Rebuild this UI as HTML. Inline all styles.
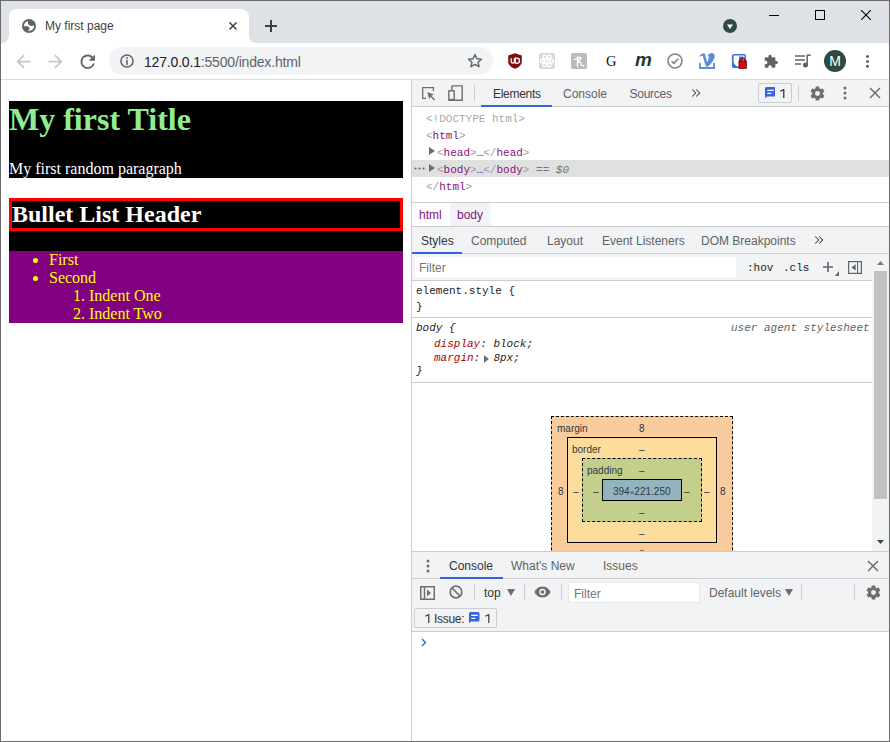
<!DOCTYPE html>
<html><head><meta charset="utf-8">
<style>
*{box-sizing:border-box;margin:0;padding:0}
html,body{width:890px;height:742px;overflow:hidden;background:#fff;font-family:"Liberation Sans",sans-serif;font-size:12px;color:#202124}
.a{position:absolute;white-space:nowrap}
#strip{position:absolute;left:0;top:0;width:890px;height:43px;background:#dee1e6}
#tab{position:absolute;left:9px;top:9px;width:240px;height:34px;background:#fff;border-radius:8px 8px 0 0}
#toolbar{position:absolute;left:0;top:43px;width:890px;height:37px;background:#fff;border-bottom:1px solid #dadce0}
#omni{position:absolute;left:109px;top:4px;width:384px;height:28px;background:#f1f3f4;border-radius:14px}
#page{position:absolute;left:1px;top:80px;width:410px;height:662px;background:#fff;font-family:"Liberation Serif",serif}
#dt{position:absolute;left:411px;top:80px;width:479px;height:662px;background:#fff;overflow:hidden}
.tb{position:absolute;background:#f1f3f4;border-bottom:1px solid #cacdd1}
.mono{font-family:"Liberation Mono",monospace;font-size:11px}
.tn{color:#881280}.br{color:#a894a6}
.lbl{color:#303942}
#frame{position:absolute;left:0;top:0;width:890px;height:742px;border:1px solid #6b6b6b;pointer-events:none}
</style></head><body>
 <div id="strip">
  <svg class="a" style="left:1px;top:35px" width="8" height="8" viewBox="0 0 8 8"><path d="M0 8C5 8 8 5 8 0V8z" fill="#fff"/></svg><svg class="a" style="left:249px;top:35px" width="8" height="8" viewBox="0 0 8 8"><path d="M8 8C3 8 0 5 0 0V8z" fill="#fff"/></svg>
  <div id="tab">
   <svg class="a" style="left:13px;top:10px" width="14" height="14" viewBox="0 0 14 14"><defs><mask id="gm"><circle cx="7" cy="7" r="5.1" fill="#fff"/><path fill="#000" d="M5.9 0V4.6C6.8 6.3 8.3 7.1 9.5 7 10.8 6.9 12 6.2 14 5.6V0z"/><path fill="#000" d="M0 7.3H5C6.4 7.5 7.6 8.5 7.6 9.5 7.6 10.5 5.8 11.4 4.8 14H0z"/></mask></defs><circle cx="7" cy="7" r="7" fill="#5f6368"/><rect width="14" height="14" fill="#fff" mask="url(#gm)"/></svg>
   <div class="a" style="left:36px;top:10px;font-size:12px;color:#3c4043">My first page</div>
   <svg class="a" style="left:219px;top:12px" width="10" height="10" viewBox="0 0 10 10"><path d="M1.5 1.5l7 7M8.5 1.5l-7 7" stroke="#3c4043" stroke-width="1.5"/></svg>
  </div>
  <svg class="a" style="left:264px;top:19px" width="14" height="14" viewBox="0 0 14 14"><path d="M7 1v12M1 7h12" stroke="#3c4043" stroke-width="2"/></svg>
  <svg class="a" style="left:723px;top:19px" width="14" height="14" viewBox="0 0 14 14"><circle cx="7" cy="7" r="7" fill="#2d4a43"/><path d="M4 5.5h6L7 10z" fill="#fff"/></svg>
  <div class="a" style="left:769px;top:15px;width:10px;height:1px;background:#000"></div>
  <div class="a" style="left:815px;top:10px;width:10px;height:10px;border:1px solid #000"></div>
  <svg class="a" style="left:861px;top:10px" width="10" height="10" viewBox="0 0 10 10"><path d="M0 0l10 10M10 0L0 10" stroke="#000" stroke-width="1.1"/></svg>
 </div>
 <div id="toolbar">
  <svg class="a" style="left:12.5px;top:7.5px" width="21" height="21" viewBox="0 0 24 24"><path fill="#c4c7ca" d="M20 11H7.83l5.59-5.59L12 4l-8 8 8 8 1.41-1.41L7.83 13H20v-2z"/></svg>
  <svg class="a" style="left:44.7px;top:7.5px" width="21" height="21" viewBox="0 0 24 24"><path fill="#c4c7ca" d="M12 4l-1.41 1.41L16.17 11H4v2h12.17l-5.58 5.59L12 20l8-8z"/></svg>
  <svg class="a" style="left:77px;top:7.8px" width="21.5" height="21.5" viewBox="0 0 24 24"><path fill="#5f6368" d="M17.65 6.35A7.958 7.958 0 0 0 12 4c-4.42 0-7.99 3.58-7.99 8s3.57 8 7.990 8c3.73 0 6.84-2.55 7.73-6h-2.08A5.99 5.99 0 0 1 12 18c-3.31 0-6-2.69-6-6s2.69-6 6-6c1.66 0 3.14.69 4.22 1.78L13 11h7V4l-2.35 2.35z"/></svg>
  <div id="omni">
   <svg class="a" style="left:10.5px;top:6.6px" width="14" height="14" viewBox="0 0 14 14"><circle cx="7" cy="7" r="6.1" stroke="#5f6368" stroke-width="1.5" fill="none"/><rect x="6.2" y="6" width="1.6" height="5" fill="#5f6368"/><rect x="6.2" y="3.2" width="1.6" height="1.7" fill="#5f6368"/></svg>
   <div class="a" style="left:35px;top:6.5px;font-size:14px;letter-spacing:-0.18px;color:#202124">127.0.0.1<span style="color:#5f6368">:5500/index.html</span></div>
   <svg class="a" style="left:358px;top:6px" width="16" height="16" viewBox="0 0 16 16"><path d="M8 1.5l1.9 4.3 4.6.4-3.5 3 1.1 4.5L8 11.3l-4.1 2.4 1.1-4.5-3.5-3 4.6-.4z" stroke="#5f6368" stroke-width="1.4" fill="none" stroke-linejoin="round"/></svg>
  </div>
  <svg class="a" style="left:508px;top:10px" width="14" height="16" viewBox="0 0 14 16"><path d="M7 0.3L13.8 2.4V8.5C13.8 12 10.5 14.6 7 15.8 3.5 14.6 0.2 12 0.2 8.5V2.4z" fill="#800c0c"/><path d="M3.2 5.2v3.3c0 1.1.8 1.7 1.6 1.7s1.6-.6 1.6-1.7V5.2" stroke="#fff" stroke-width="1.3" fill="none"/><path d="M7.3 5.2h1.7a2.5 2.5 0 0 1 0 5H7.3z" stroke="#fff" stroke-width="1.3" fill="none"/></svg>
  <div class="a" style="left:539px;top:10px;width:16px;height:16px;background:#d6d8dc;border-radius:2px"></div>
  <svg class="a" style="left:539px;top:10px" width="16" height="16" viewBox="0 0 16 16"><g stroke="#fff" stroke-width="1.4" fill="none"><ellipse cx="8" cy="8" rx="6.5" ry="2.5"/><ellipse cx="8" cy="8" rx="6.5" ry="2.5" transform="rotate(60 8 8)"/><ellipse cx="8" cy="8" rx="6.5" ry="2.5" transform="rotate(120 8 8)"/></g><circle cx="8" cy="8" r="1.2" fill="#fff"/></svg>
  <div class="a" style="left:571px;top:10px;width:16px;height:16px;background:#bcbcbc;border-radius:2px"></div>
  <svg class="a" style="left:571px;top:10px" width="16" height="16" viewBox="0 0 16 16"><path d="M6.5 3.6V13.4M3.8 6.4L6.5 6M6.5 7.2C7 4.5 9.3 3.7 9.8 5 10.3 6.5 8.2 7.6 6.5 8.6M6.6 9.6C8 8.6 9.6 9 10 10.6 10.5 12.4 11.2 13.4 12.8 12.4" stroke="#fff" stroke-width="1.3" fill="none" stroke-linecap="round"/></svg>
  <div class="a" style="left:606px;top:9px;font-family:'Liberation Serif',serif;font-size:14.5px;color:#111;line-height:18px">G</div>
  <div class="a" style="left:635px;top:7px;font-family:'Liberation Sans',sans-serif;font-size:19px;font-weight:bold;font-style:italic;color:#1f3a33;line-height:20px;letter-spacing:-0.5px">m</div>
  <svg class="a" style="left:667px;top:10px" width="16" height="16" viewBox="0 0 16 16"><circle cx="8" cy="8" r="7" stroke="#7f8583" stroke-width="1.6" fill="none"/><path d="M4.6 8.2l2.2 2.2 4.5-4.6" stroke="#7f8583" stroke-width="1.6" fill="none"/></svg>
  <svg class="a" style="left:699px;top:10px" width="16" height="16" viewBox="0 0 16 16"><path d="M0.9 10v5h14.2v-5" stroke="#5a8fd6" stroke-width="1.8" fill="none"/><path d="M0.2 3.5C1.5 1.5 3.5 0 5 .3 6 .6 6.3 2 6.8 4.5L8.2 9.2C9 7.5 10 5.5 9.8 4.2 9.6 3.2 9.2 3 8.8 2.8 9.5 1 11 .1 12.6.1c1.9 0 3.3 1.4 3.2 3.2-.2 2.7-3.3 7.5-6.5 10-.8.6-1.7.7-2.3-.1C6 11.5 4.8 6.5 4.2 4.2 3.9 3 3.5 2.6 3 2.7 2 2.8 1.2 3.5.2 3.5z" fill="#5a8fd6"/></svg>
  <svg class="a" style="left:731px;top:10px" width="16" height="16" viewBox="0 0 16 16"><rect x="0.9" y="0.9" width="14.2" height="14.2" rx="2.2" fill="#3f6ee8"/><path d="M2.6 2.6h10.8v5.8c0 3-2.8 4.8-5.4 5.5-2.6-.7-5.4-2.5-5.4-5.5z" fill="#fff"/><path d="M8 3.6h4.4v5c0 2.3-2.2 3.6-4.4 4.3z" fill="#3f6ee8"/><path d="M9.6 8.4V7.3a2 2 0 0 1 4 0v1.1" stroke="#b00010" stroke-width="1.5" fill="none"/><rect x="7.9" y="8" width="7.6" height="7.4" fill="#e8000f" stroke="#3a1010" stroke-width="0.7"/></svg>
  <svg class="a" style="left:763px;top:52px;display:none" width="1" height="1"></svg>
  <svg class="a" style="left:763px;top:11px" width="16" height="15" viewBox="0 0 24 24"><path fill="#5f6368" d="M20.5 11H19V7c0-1.1-.9-2-2-2h-4V3.5C13 2.12 11.88 1 10.5 1S8 2.12 8 3.5V5H4c-1.1 0-1.99.9-1.99 2v3.8H3.5c1.49 0 2.7 1.21 2.7 2.7s-1.21 2.7-2.7 2.7H2V20c0 1.1.9 2 2 2h3.8v-1.5c0-1.49 1.21-2.7 2.7-2.7 1.49 0 2.7 1.21 2.7 2.7V22H17c1.1 0 2-.9 2-2v-4h1.5c1.38 0 2.5-1.12 2.5-2.5S21.88 11 20.5 11z"/></svg>
  <svg class="a" style="left:795px;top:11px" width="16" height="14" viewBox="0 0 16 14"><path d="M0 2h10M0 6h10M0 10h6" stroke="#5f6368" stroke-width="1.5"/><path d="M12.2 11V1.2h3.5" stroke="#5f6368" stroke-width="1.5" fill="none"/><circle cx="10.5" cy="11" r="2.5" fill="#5f6368"/></svg>
  <div class="a" style="left:824px;top:49px;display:none"></div>
  <div class="a" style="left:824px;top:7px;width:22px;height:22px;border-radius:11px;background:#2d4a43;color:#fff;font-size:14px;line-height:22px;text-align:center">M</div>
  <svg class="a" style="left:865px;top:11px" width="5" height="14" viewBox="0 0 5 14"><circle cx="2.5" cy="2.5" r="1.5" fill="#5f6368"/><circle cx="2.5" cy="7.4" r="1.5" fill="#5f6368"/><circle cx="2.5" cy="12.3" r="1.5" fill="#5f6368"/></svg>
 </div>
 <div id="page">
  <div class="a" style="left:8px;top:21px;width:394px;height:76.5px;background:#000"></div>
  <div class="a" style="left:8px;top:21px;font-size:32px;font-weight:bold;color:#90ee90;line-height:37px">My first Title</div>
  <div class="a" style="left:8px;top:79.7px;font-size:16px;color:#fff;line-height:18.4px">My first random paragraph</div>
  <div class="a" style="left:8px;top:118px;width:394px;height:52.5px;background:#000"></div>
  <div class="a" style="left:8px;top:118px;width:394px;height:32.7px;border:3px solid #f00;"></div>
  <div class="a" style="left:11px;top:121px;font-size:24px;font-weight:bold;color:#fff;line-height:27.6px">Bullet List Header</div>
  <div class="a" style="left:8px;top:170.5px;width:394px;height:72px;background:#800080"></div>
  <div class="a" style="left:8px;top:170.5px;width:394px;font-size:16px;color:#ff0;line-height:18px">
   <ul style="padding-left:40px;list-style:disc"><li>First</li><li>Second<ol style="padding-left:40px"><li>Indent One</li><li>Indent Two</li></ol></li></ul>
  </div>
 </div>
 <div id="dt">
  <div class="a" style="left:0;top:0;width:1px;height:662px;background:#cbcdd1"></div>
  <!-- main toolbar -->
  <div class="tb" style="left:1px;top:0;width:478px;height:27px"></div>
  <svg class="a" style="left:11px;top:7px" width="14" height="14" viewBox="0 0 14 14"><path d="M4 11.4H0.7V0.7H11.4V4" stroke="#6e6e6e" stroke-width="1.3" fill="none"/><path d="M5.2 5L12 7.4 9.4 8.7 13.1 12.4 12.1 13.4 8.4 9.7 7.3 12.2z" fill="#6e6e6e"/></svg>
  <svg class="a" style="left:36px;top:4px" width="17" height="18" viewBox="0 0 17 18"><rect x="4.9" y="1.9" width="10.3" height="14.3" rx="0.4" stroke="#6e6e6e" stroke-width="1.4" fill="none"/><rect x="1.8" y="6.8" width="5.4" height="9.4" rx="0.4" stroke="#6e6e6e" stroke-width="1.4" fill="#f1f3f4"/><rect x="1.4" y="14.8" width="6.2" height="2" fill="#6e6e6e"/></svg>
  <div class="a" style="left:63px;top:5px;width:1px;height:16px;background:#cbcdd1"></div>
  <div class="a" style="left:82px;top:7px;color:#333;letter-spacing:-0.28px">Elements</div>
  <div class="a" style="left:70px;top:25px;width:71px;height:2px;background:#3264e2"></div>
  <div class="a" style="left:152px;top:7px;color:#5f6368">Console</div>
  <div class="a" style="left:218.5px;top:7px;color:#5f6368;letter-spacing:-0.25px">Sources</div>
  <svg class="a" style="left:280px;top:8px" width="10" height="10" viewBox="0 0 10 10"><path d="M1.2 1.5l3.5 3.5-3.5 3.5M5.2 1.5l3.5 3.5-3.5 3.5" stroke="#3c3c3c" stroke-width="1.05" fill="none"/></svg>
  <div class="a" style="left:346.5px;top:3.3px;width:34px;height:19.5px;border:1px solid #cbcdd1;border-radius:2px"></div>
  <svg class="a" style="left:353.7px;top:7.2px" width="10.5" height="11.5" viewBox="0 0 10.5 11.5"><path d="M1.5 0h7.5A1.5 1.5 0 0 1 10.5 1.5v6.5A1.5 1.5 0 0 1 9 9.5H2L0 11.2V1.5A1.5 1.5 0 0 1 1.5 0z" fill="#3466e0"/><path d="M2.3 3.3h6.5M2.3 6.3h4" stroke="#fff" stroke-width="1.3"/></svg>
  <svg class="a" style="left:368.6px;top:8.5px" width="5" height="9.5" viewBox="0 0 5 9.5"><path d="M3.8 0.2V9.3M3.8 0.6L0.4 2.3" stroke="#202124" stroke-width="1.15" fill="none"/></svg>
  <div class="a" style="left:387px;top:5px;width:1px;height:16px;background:#cbcdd1"></div>
  <svg class="a" style="left:397.5px;top:4.5px" width="17" height="17" viewBox="0 0 24 24"><path fill="#6e6e6e" d="M19.4 13c.04-.3.06-.65.06-1s-.02-.7-.06-1l2.1-1.65c.2-.15.25-.42.12-.64l-2-3.46c-.12-.22-.39-.3-.61-.22l-2.49 1c-.52-.4-1.08-.73-1.69-.98l-.38-2.65A.49.49 0 0 0 14 2h-4c-.25 0-.46.18-.49.42l-.38 2.65c-.61.25-1.17.59-1.69.98l-2.49-1c-.23-.09-.49 0-.61.22l-2 3.46c-.13.22-.07.49.12.64L4.57 11c-.04.32-.07.66-.07 1s.03.68.07 1l-2.11 1.65c-.19.15-.24.42-.12.64l2 3.46c.12.22.39.3.61.22l2.49-1c.52.4 1.08.73 1.69.98l.38 2.65c.03.24.24.42.49.42h4c.25 0 .46-.18.49-.42l.38-2.65c.61-.25 1.17-.59 1.69-.98l2.49 1c.23.09.49 0 .61-.22l2-3.46c.12-.22.07-.49-.12-.64L19.4 13zM12 15.5A3.5 3.5 0 1 1 12 8.5a3.5 3.5 0 0 1 0 7z"/></svg>
  <svg class="a" style="left:431px;top:6px" width="6" height="14" viewBox="0 0 6 14"><circle cx="3" cy="2" r="1.5" fill="#6e6e6e"/><circle cx="3" cy="7" r="1.5" fill="#6e6e6e"/><circle cx="3" cy="12" r="1.5" fill="#6e6e6e"/></svg>
  <svg class="a" style="left:458px;top:7px" width="12" height="12" viewBox="0 0 12 12"><path d="M1 1l10 10M11 1L1 11" stroke="#6e6e6e" stroke-width="1.5"/></svg>
  <!-- elements tree -->
  <div class="a" style="left:1px;top:80px;width:478px;height:17px;background:#e0e0e0"></div>
  <div class="a mono" style="left:15px;top:31px;line-height:17px">
   <div style="color:#a8a8a8">&lt;!DOCTYPE html&gt;</div>
   <div><span class="br">&lt;</span><span class="tn">html</span><span class="br">&gt;</span></div>
   <div style="padding-left:11px"><span class="br">&lt;</span><span class="tn">head</span><span class="br">&gt;</span><span style="color:#303942">…</span><span class="br">&lt;/</span><span class="tn">head</span><span class="br">&gt;</span></div>
   <div style="padding-left:11px"><span class="br">&lt;</span><span class="tn">body</span><span class="br">&gt;</span><span style="color:#303942">…</span><span class="br">&lt;/</span><span class="tn">body</span><span class="br">&gt;</span><span style="color:#777"> == <i>$0</i></span></div>
   <div><span class="br">&lt;/</span><span class="tn">html</span><span class="br">&gt;</span></div>
  </div>
  <svg class="a" style="left:18px;top:67px" width="6" height="8" viewBox="0 0 6 8"><path d="M0 0l6 4-6 4z" fill="#6e6e6e"/></svg>
  <svg class="a" style="left:18px;top:84px" width="6" height="8" viewBox="0 0 6 8"><path d="M0 0l6 4-6 4z" fill="#6e6e6e"/></svg>
  <svg class="a" style="left:3px;top:87px" width="11" height="3" viewBox="0 0 11 3"><circle cx="1.5" cy="1.5" r="1.1" fill="#666"/><circle cx="5.5" cy="1.5" r="1.1" fill="#666"/><circle cx="9.5" cy="1.5" r="1.1" fill="#666"/></svg>
  <!-- breadcrumbs -->
  <div class="a" style="left:1px;top:122px;width:478px;height:25px;border-top:1px solid #cbcdd1;border-bottom:1px solid #cbcdd1;background:#fff"></div>
  <div class="a" style="left:39px;top:123px;width:41px;height:23px;background:#f1f3f4"></div>
  <div class="a tn" style="left:8px;top:128px">html</div>
  <div class="a tn" style="left:46px;top:128px">body</div>
  <!-- styles tabs -->
  <div class="tb" style="left:1px;top:147px;width:478px;height:27px"></div>
  <div class="a" style="left:10px;top:154px;color:#333">Styles</div>
  <div class="a" style="left:1px;top:172px;width:50px;height:2px;background:#3264e2"></div>
  <div class="a" style="left:60px;top:154px;color:#5f6368">Computed</div>
  <div class="a" style="left:136px;top:154px;color:#5f6368">Layout</div>
  <div class="a" style="left:191px;top:154px;color:#5f6368">Event Listeners</div>
  <div class="a" style="left:290px;top:154px;color:#5f6368">DOM Breakpoints</div>
  <svg class="a" style="left:403px;top:155px" width="10" height="10" viewBox="0 0 10 10"><path d="M1.2 1.5l3.5 3.5-3.5 3.5M5.2 1.5l3.5 3.5-3.5 3.5" stroke="#3c3c3c" stroke-width="1.05" fill="none"/></svg>
  <!-- filter bar -->
  <div class="a" style="left:1px;top:174px;width:478px;height:27px;background:#f1f3f4"></div><div class="a" style="left:1px;top:200px;width:460px;height:1px;background:#cacdd1"></div>
  <div class="a" style="left:4px;top:177px;width:321px;height:20px;background:#fff"></div>
  <div class="a" style="left:8px;top:181px;color:#757575">Filter</div>
  <div class="a mono" style="left:336px;top:182px;color:#222;font-size:11px">:hov</div>
  <div class="a mono" style="left:372px;top:182px;color:#222;font-size:11px">.cls</div>
  <svg class="a" style="left:411px;top:181px" width="12" height="12" viewBox="0 0 12 12"><path d="M6 1v10M1 6h10" stroke="#5f6368" stroke-width="1.6"/></svg>
  <svg class="a" style="left:424px;top:191px" width="4" height="5" viewBox="0 0 4 5"><path d="M4 0v5H0z" fill="#5f6368"/></svg>
  <svg class="a" style="left:437px;top:181px" width="15" height="13" viewBox="0 0 15 13"><rect x="0.6" y="0.6" width="12.8" height="11.8" stroke="#5f6368" stroke-width="1.2" fill="none"/><path d="M9.6 1v11" stroke="#5f6368" stroke-width="1"/><path d="M7.6 3.2v6.4L3.4 6.4z" fill="#5f6368"/></svg>
  <!-- rules -->
  <div class="a mono" style="left:5px;top:203px;line-height:17px;color:#222">element.style {</div><div class="a mono" style="left:5px;top:219px;line-height:17px;color:#222">}</div>
  <div class="a" style="left:1px;top:237px;width:462px;height:1px;background:#cbcdd1"></div>
  <div class="a mono" style="left:5px;top:240.5px;line-height:15px;color:#222;font-style:italic">body {</div>
  <div class="a mono" style="left:320px;top:240.5px;line-height:15px;color:#5f6368;font-style:italic">user agent stylesheet</div>
  <div class="a mono" style="left:23px;top:256.5px;line-height:15px;font-style:italic"><span style="color:#b00000">display</span><span style="color:#222">: block;</span></div>
  <div class="a mono" style="left:23px;top:270.5px;line-height:15px;font-style:italic"><span style="color:#b00000">margin</span><span style="color:#222">: &nbsp;8px;</span></div>
  <svg class="a" style="left:72.5px;top:274.5px" width="6" height="8" viewBox="0 0 6 8"><path d="M0 0l5 4-5 4z" fill="#727272"/></svg>
  <div class="a mono" style="left:5px;top:284px;line-height:15px;color:#222;font-style:italic">}</div>
  <div class="a" style="left:1px;top:302px;width:462px;height:1px;background:#cbcdd1"></div>
  <!-- box model -->
  <div class="a" style="left:140px;top:336px;width:182px;height:200px;background:#f9cc9d;border:1px dashed #000"></div>
  <div class="a" style="left:156px;top:357px;width:150px;height:106px;background:#fddd9b;border:1px solid #000"></div>
  <div class="a" style="left:171px;top:378px;width:120px;height:64px;background:#c3cf8b;border:1px dashed #000"></div>
  <div class="a" style="left:191px;top:399px;width:80px;height:22px;background:#93b4bf;border:1px solid #000"></div>
  <div class="a lbl" style="left:146px;top:342.5px;font-size:10px">margin</div>
  <div class="a lbl" style="left:228px;top:342.5px;font-size:10px">8</div>
  <div class="a lbl" style="left:161px;top:363.5px;font-size:10px">border</div>
  <div class="a lbl" style="left:228px;top:363.5px;font-size:10px">–</div>
  <div class="a lbl" style="left:176px;top:384.5px;font-size:10px">padding</div>
  <div class="a lbl" style="left:228px;top:384.5px;font-size:10px">–</div>
  <div class="a lbl" style="left:147px;top:405.5px;font-size:10px">8</div>
  <div class="a lbl" style="left:162px;top:405.5px;font-size:10px">–</div>
  <div class="a lbl" style="left:182px;top:405.5px;font-size:10px">–</div>
  <div class="a lbl" style="left:202px;top:405.5px;font-size:10px">394<span style="font-size:8px">×</span>221.250</div>
  <div class="a lbl" style="left:273px;top:405.5px;font-size:10px">–</div>
  <div class="a lbl" style="left:293px;top:405.5px;font-size:10px">–</div>
  <div class="a lbl" style="left:309px;top:405.5px;font-size:10px">8</div>
  <div class="a lbl" style="left:228px;top:426.5px;font-size:10px">–</div>
  <div class="a lbl" style="left:228px;top:447.5px;font-size:10px">–</div>
  <div class="a lbl" style="left:228px;top:468.5px;font-size:10px">8</div>
  <!-- scrollbar -->
  
  <div class="a" style="left:461px;top:174px;width:17px;height:297px;background:#f1f3f4"></div><div class="a" style="left:463px;top:191px;width:13px;height:228px;background:#c1c1c1"></div>
  <svg class="a" style="left:466px;top:181px" width="7" height="4" viewBox="0 0 7 4"><path d="M0 4L3.5 0 7 4z" fill="#7a7a7a"/></svg>
  <svg class="a" style="left:466px;top:460px" width="7" height="4" viewBox="0 0 7 4"><path d="M0 0L3.5 4 7 0z" fill="#2f5035"/></svg>
  <!-- drawer -->
  <div class="tb" style="left:1px;top:471px;width:478px;height:28px;border-top:1px solid #cbcdd1"></div>
  <svg class="a" style="left:15px;top:479px" width="4" height="14" viewBox="0 0 4 14"><circle cx="2" cy="2" r="1.5" fill="#6e6e6e"/><circle cx="2" cy="7" r="1.5" fill="#6e6e6e"/><circle cx="2" cy="12" r="1.5" fill="#6e6e6e"/></svg>
  <div class="a" style="left:38px;top:479px;color:#333">Console</div>
  <div class="a" style="left:29px;top:497px;width:63px;height:2px;background:#3264e2"></div>
  <div class="a" style="left:100px;top:479px;color:#5f6368">What's New</div>
  <div class="a" style="left:192px;top:479px;color:#5f6368">Issues</div>
  <svg class="a" style="left:456px;top:480px" width="12" height="12" viewBox="0 0 12 12"><path d="M1 1l10 10M11 1L1 11" stroke="#6e6e6e" stroke-width="1.5"/></svg>
  <!-- console toolbar -->
  <div class="tb" style="left:1px;top:499px;width:478px;height:53px"></div>
  <svg class="a" style="left:9px;top:506px" width="15" height="14" viewBox="0 0 15 14"><rect x="0.75" y="0.75" width="13.5" height="12.5" stroke="#6e6e6e" stroke-width="1.5" fill="none"/><path d="M4.5 1v12" stroke="#6e6e6e" stroke-width="1.5"/><path d="M7 3.5l4 3.5-4 3.5z" fill="#6e6e6e"/></svg>
  <svg class="a" style="left:38px;top:505px" width="14" height="14" viewBox="0 0 14 14"><circle cx="7" cy="7" r="5.8" stroke="#6e6e6e" stroke-width="1.7" fill="none"/><path d="M3 3l8 8" stroke="#6e6e6e" stroke-width="1.7"/></svg>
  <div class="a" style="left:63px;top:504px;width:1px;height:16px;background:#cbcdd1"></div>
  <div class="a" style="left:73px;top:506px;color:#333">top</div>
  <svg class="a" style="left:96px;top:508px" width="8" height="8" viewBox="0 0 8 8"><path d="M0 1h8L4 8z" fill="#6e6e6e"/></svg>
  <div class="a" style="left:113px;top:504px;width:1px;height:16px;background:#cbcdd1"></div>
  <svg class="a" style="left:123px;top:506px" width="17" height="12" viewBox="0 0 17 12"><path d="M8.5 0.5C4.5 0.5 1.5 3.5 0.5 6c1 2.5 4 5.5 8 5.5s7-3 8-5.5c-1-2.5-4-5.5-8-5.5z" fill="#6e6e6e"/><circle cx="8.5" cy="6" r="3.3" fill="#f1f3f4"/><circle cx="8.5" cy="6" r="1.8" fill="#6e6e6e"/></svg>
  <div class="a" style="left:150px;top:504px;width:1px;height:16px;background:#cbcdd1"></div>
  <div class="a" style="left:157px;top:502px;width:132px;height:21px;background:#fff;border:1px solid #e8e8e8"></div>
  <div class="a" style="left:163px;top:507px;color:#757575">Filter</div>
  <div class="a" style="left:298px;top:506px;color:#5f6368">Default levels</div>
  <svg class="a" style="left:374px;top:508px" width="8" height="8" viewBox="0 0 8 8"><path d="M0 1h8L4 8z" fill="#6e6e6e"/></svg>
  <div class="a" style="left:390px;top:504px;width:1px;height:16px;background:#cbcdd1"></div>
  <div class="a" style="left:443px;top:504px;width:1px;height:16px;background:#cbcdd1"></div>
  <svg class="a" style="left:453.5px;top:503.5px" width="17" height="17" viewBox="0 0 24 24"><path fill="#6e6e6e" d="M19.4 13c.04-.3.06-.65.06-1s-.02-.7-.06-1l2.1-1.65c.2-.15.25-.42.12-.64l-2-3.460c-.12-.22-.39-.3-.61-.22l-2.49 1c-.52-.4-1.08-.73-1.690-.98l-.38-2.65A.49.49 0 0 0 14 2h-4c-.25 0-.46.18-.49.42l-.38 2.65c-.61.25-1.17.59-1.69.98l-2.49-1c-.23-.09-.49 0-.61.22l-2 3.46c-.13.22-.07.49.12.64L4.57 11c-.04.32-.07.66-.07 1s.03.68.07 1l-2.11 1.65c-.19.15-.24.42-.12.64l2 3.46c.12.22.39.3.61.22l2.49-1c.52.4 1.08.73 1.69.98l.38 2.65c.03.24.24.42.49.42h4c.25 0 .46-.18.49-.42l.38-2.65c.61-.25 1.17-.59 1.69-.98l2.49 1c.23.09.49 0 .61-.22l2-3.46c.12-.22.07-.49-.12-.64L19.4 13zM12 15.5A3.5 3.5 0 1 1 12 8.5a3.5 3.5 0 0 1 0 7z"/></svg>
  <div class="a" style="left:3px;top:528px;width:83px;height:20px;border:1px solid #cbcdd1;border-radius:2px;background:#f1f3f4"></div>
  <svg class="a" style="left:13.6px;top:533.8px" width="5" height="9.5" viewBox="0 0 5 9.5"><path d="M3.8 0.2V9.3M3.8 0.6L0.4 2.3" stroke="#333" stroke-width="1.15" fill="none"/></svg><div class="a" style="left:23px;top:532px;color:#333;letter-spacing:-0.3px">Issue:</div>
  <svg class="a" style="left:58.4px;top:532px" width="10.5" height="11.5" viewBox="0 0 10.5 11.5"><path d="M1.5 0h7.5A1.5 1.5 0 0 1 10.5 1.5v6.5A1.5 1.5 0 0 1 9 9.5H2L0 11.2V1.5A1.5 1.5 0 0 1 1.5 0z" fill="#3466e0"/><path d="M2.3 3.3h6.5M2.3 6.3h4" stroke="#fff" stroke-width="1.3"/></svg>
  <svg class="a" style="left:73.6px;top:533.8px" width="5" height="9.5" viewBox="0 0 5 9.5"><path d="M3.8 0.2V9.3M3.8 0.6L0.4 2.3" stroke="#333" stroke-width="1.15" fill="none"/></svg>
  <div class="a" style="left:1px;top:551px;width:478px;height:1px;background:#cbcdd1"></div>
  <svg class="a" style="left:10px;top:558px" width="6" height="9" viewBox="0 0 6 9"><path d="M1 1l3.5 3.5L1 8" stroke="#1a73e8" stroke-width="1.4" fill="none"/></svg>
</div>
 <div id="frame"></div>
</body></html>
